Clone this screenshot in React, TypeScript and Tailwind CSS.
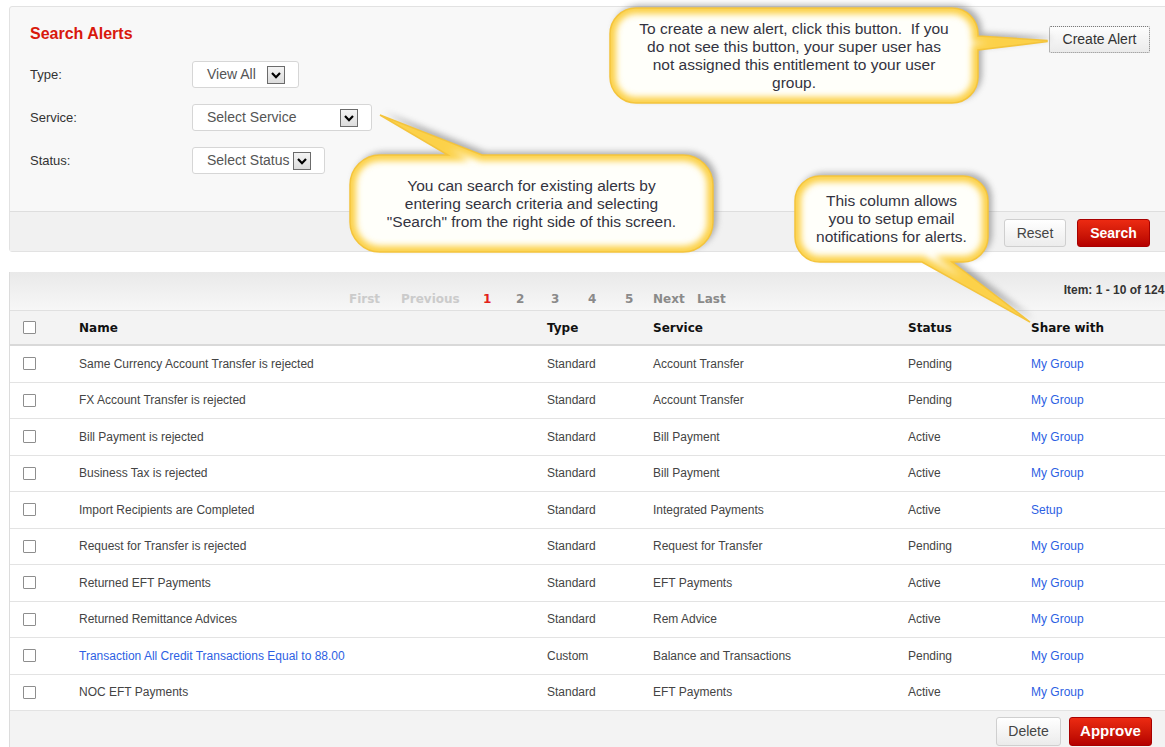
import React from "react";

type Tail =
  | { side: "right"; a: number; b: number; tx: number; ty: number }
  | { side: "top"; a: number; b: number; tx: number; ty: number }
  | { side: "bottom"; a: number; b: number; tx: number; ty: number };

type Callout = {
  id: string;
  x: number;
  y: number;
  w: number;
  h: number;
  r: number;
  tail: Tail;
  lines: string[];
};

// Outline of a rounded speech bubble with a single pointer
function calloutPath(c: Callout): string {
  const { x, y, w, h, r, tail } = c;
  const R = x + w;
  const B = y + h;
  const arc = (ex: number, ey: number) => `A ${r} ${r} 0 0 1 ${ex} ${ey}`;
  if (tail.side === "right") {
    return [
      `M ${x + r} ${y}`,
      `H ${R - r}`,
      arc(R, y + r),
      `V ${tail.a}`,
      `L ${tail.tx} ${tail.ty - 0.6}`,
      `L ${tail.tx} ${tail.ty + 0.6}`,
      `L ${R} ${tail.b}`,
      `V ${B - r}`,
      arc(R - r, B),
      `H ${x + r}`,
      arc(x, B - r),
      `V ${y + r}`,
      arc(x + r, y),
      "Z",
    ].join(" ");
  }
  if (tail.side === "top") {
    return [
      `M ${x + r} ${y}`,
      `H ${tail.a}`,
      `L ${tail.tx} ${tail.ty}`,
      `L ${tail.b} ${y}`,
      `H ${R - r}`,
      arc(R, y + r),
      `V ${B - r}`,
      arc(R - r, B),
      `H ${x + r}`,
      arc(x, B - r),
      `V ${y + r}`,
      arc(x + r, y),
      "Z",
    ].join(" ");
  }
  return [
    `M ${x + r} ${y}`,
    `H ${R - r}`,
    arc(R, y + r),
    `V ${B - r}`,
    arc(R - r, B),
    `H ${tail.b}`,
    `L ${tail.tx} ${tail.ty}`,
    `L ${tail.a} ${B}`,
    `H ${x + r}`,
    arc(x, B - r),
    `V ${y + r}`,
    arc(x + r, y),
    "Z",
  ].join(" ");
}

const callouts: Callout[] = [
  {
    id: "create",
    x: 610,
    y: 8,
    w: 368,
    h: 95,
    r: 26,
    tail: { side: "right", a: 36, b: 50, tx: 1047, ty: 41 },
    lines: [
      "To create a new alert, click this button.  If you",
      "do not see this button, your super user has",
      "not assigned this entitlement to your user",
      "group.",
    ],
  },
  {
    id: "search",
    x: 350,
    y: 155,
    w: 363,
    h: 97,
    r: 30,
    tail: { side: "top", a: 448, b: 482, tx: 380, ty: 115 },
    lines: [
      "You can search for existing alerts by",
      "entering search criteria and selecting",
      '"Search" from the right side of this screen.',
    ],
  },
  {
    id: "share",
    x: 795,
    y: 176,
    w: 193,
    h: 86,
    r: 25,
    tail: { side: "bottom", a: 922, b: 952, tx: 1030, ty: 322 },
    lines: ["This column allows", "you to setup email", "notifications for alerts."],
  },
];

type Row = {
  name: string;
  type: string;
  service: string;
  status: string;
  share: string;
  link?: boolean;
};

const rows: Row[] = [
  { name: "Same Currency Account Transfer is rejected", type: "Standard", service: "Account Transfer", status: "Pending", share: "My Group" },
  { name: "FX Account Transfer is rejected", type: "Standard", service: "Account Transfer", status: "Pending", share: "My Group" },
  { name: "Bill Payment is rejected", type: "Standard", service: "Bill Payment", status: "Active", share: "My Group" },
  { name: "Business Tax is rejected", type: "Standard", service: "Bill Payment", status: "Active", share: "My Group" },
  { name: "Import Recipients are Completed", type: "Standard", service: "Integrated Payments", status: "Active", share: "Setup" },
  { name: "Request for Transfer is rejected", type: "Standard", service: "Request for Transfer", status: "Pending", share: "My Group" },
  { name: "Returned EFT Payments", type: "Standard", service: "EFT Payments", status: "Active", share: "My Group" },
  { name: "Returned Remittance Advices", type: "Standard", service: "Rem Advice", status: "Active", share: "My Group" },
  { name: "Transaction All Credit Transactions Equal to 88.00", type: "Custom", service: "Balance and Transactions", status: "Pending", share: "My Group", link: true },
  { name: "NOC EFT Payments", type: "Standard", service: "EFT Payments", status: "Active", share: "My Group" },
];

function ArrowBox() {
  return (
    <span className="flex h-[18px] w-[18px] shrink-0 items-center justify-center border border-[#6b6b6b] bg-gradient-to-b from-[#f4f4f4] to-[#dcdcdc]">
      <svg width="12" height="12" viewBox="0 0 12 12">
        <polyline points="2,4 6,8.2 10,4" fill="none" stroke="#000" strokeWidth="2.2" strokeLinejoin="miter" />
      </svg>
    </span>
  );
}

function SelectBox({ label, width }: { label: string; width: string }) {
  return (
    <div
      className={`flex h-[27px] items-center justify-between rounded-[3px] border border-[#d6d6d6] bg-white pl-[14px] pr-[13px] text-[14px] text-[#555] ${width}`}
    >
      <span className="whitespace-nowrap">{label}</span>
      <ArrowBox />
    </div>
  );
}

function CheckBox() {
  return <span className="block h-[13px] w-[13px] rounded-[1px] border border-[#8e8e8e] bg-white" />;
}

export default function App() {
  return (
    <div className="relative h-[747px] w-[1165px] overflow-hidden bg-white font-['Liberation_Sans',Arial,sans-serif] text-[#333]">
      <div className="pt-[6px]">
        {/* Search criteria panel */}
        <div className="ml-[9px] w-[1170px] rounded-[3px] border border-[#e2e2e2] bg-[#f8f8f8]">
          <div className="h-[204px] pl-[20px] pr-[28px] pt-[17px]">
            <div className="flex items-start justify-between">
              <h1 className="text-[16px] font-bold leading-[20px] text-[#d8190c]">Search Alerts</h1>
              <button className="mt-[2px] flex h-[27px] w-[101px] items-center justify-center rounded-[2px] border border-dotted border-[#7a7a7a] bg-gradient-to-b from-[#fdfdfd] to-[#ebebeb] text-[14px] text-[#333]">
                Create Alert
              </button>
            </div>
            <div className="mt-[8px] flex flex-col gap-[16px] text-[13px] text-[#333]">
              <div className="flex items-center">
                <span className="w-[162px]">Type:</span>
                <SelectBox label="View All" width="w-[107px]" />
              </div>
              <div className="flex items-center">
                <span className="w-[162px]">Service:</span>
                <SelectBox label="Select Service" width="w-[180px]" />
              </div>
              <div className="flex items-center">
                <span className="w-[162px]">Status:</span>
                <SelectBox label="Select Status" width="w-[133px]" />
              </div>
            </div>
          </div>
          <div className="flex h-[40px] justify-end gap-[11px] border-t border-[#dedede] bg-[#f1f1f1] pr-[28px] pt-[7px]">
            <button className="h-[28px] w-[62px] rounded-[3px] border border-[#cfcfcf] bg-gradient-to-b from-[#ffffff] to-[#ececec] text-[14px] text-[#444]">
              Reset
            </button>
            <button className="h-[28px] w-[73px] rounded-[3px] border border-[#a80000] bg-gradient-to-b from-[#ec2a12] to-[#b50000] text-[14px] font-bold text-white">
              Search
            </button>
          </div>
        </div>

        {/* Results panel */}
        <div className="ml-[9px] mt-[20px] w-[1170px] border-l border-[#dcdcdc] bg-[#f3f3f3]">
          <div className="flex h-[38px] items-start bg-gradient-to-b from-[#e9e9e9] to-[#f7f7f7] font-['DejaVu_Sans',Verdana,sans-serif] text-[12px] font-bold leading-[14px]">
            <div className="flex pl-[339px] pt-[20px] text-[#8a8a8a]">
              <span className="w-[52px] text-[#cbcbcb]">First</span>
              <span className="w-[82px] text-[#cbcbcb]">Previous</span>
              <span className="w-[33px] text-[#e3211a]">1</span>
              <span className="w-[35px]">2</span>
              <span className="w-[37px]">3</span>
              <span className="w-[37px]">4</span>
              <span className="w-[28px]">5</span>
              <span className="w-[44px]">Next</span>
              <span>Last</span>
            </div>
            <div className="ml-[338px] whitespace-nowrap pt-[11px] font-['Liberation_Sans',Arial,sans-serif] text-[12px] text-[#333]">
              Item: 1 - 10 of 124
            </div>
          </div>

          <div className="grid h-[36px] grid-cols-[69px_468px_106px_255px_123px_1fr] items-center border-t border-b-2 border-[#e0e0e0] border-b-[#d9d9d9] bg-[#f3f3f3] font-['DejaVu_Sans',Verdana,sans-serif] text-[12px] font-bold text-[#111]">
            <div className="pl-[13px]">
              <CheckBox />
            </div>
            <div>Name</div>
            <div>Type</div>
            <div>Service</div>
            <div>Status</div>
            <div>Share with</div>
          </div>

          {rows.map((r) => (
            <div
              key={r.name}
              className="grid h-[36.5px] grid-cols-[69px_468px_106px_255px_123px_1fr] items-center border-b border-[#e3e3e3] bg-white text-[12px] text-[#444]"
            >
              <div className="pl-[13px]">
                <CheckBox />
              </div>
              <div className={r.link ? "text-[#2d5fe3]" : ""}>{r.name}</div>
              <div>{r.type}</div>
              <div>{r.service}</div>
              <div>{r.status}</div>
              <div className="text-[#2d5fe3]">{r.share}</div>
            </div>
          ))}

          <div className="flex h-[60px] justify-end gap-[8px] pr-[27px] pt-[6px]">
            <button className="h-[29px] w-[65px] rounded-[3px] border border-[#cfcfcf] bg-gradient-to-b from-[#ffffff] to-[#ebebeb] text-[14px] text-[#444]">
              Delete
            </button>
            <button className="h-[29px] w-[83px] rounded-[3px] border border-[#a80000] bg-gradient-to-b from-[#ec2a12] to-[#b50000] text-[15px] font-bold text-white">
              Approve
            </button>
          </div>
        </div>
      </div>

      {/* Help callouts drawn over the page */}
      <svg className="pointer-events-none absolute left-0 top-0" width="1165" height="747" viewBox="0 0 1165 747">
        <defs>
          <filter id="calloutShadow" x="-20%" y="-20%" width="140%" height="140%">
            <feGaussianBlur stdDeviation="3" />
          </filter>
          <filter id="calloutGlow" x="-20%" y="-20%" width="140%" height="140%">
            <feGaussianBlur stdDeviation="3" />
          </filter>
          {callouts.map((c) => (
            <clipPath key={c.id} id={`clip-${c.id}`}>
              <path d={calloutPath(c)} />
            </clipPath>
          ))}
        </defs>
        {callouts.map((c) => {
          const d = calloutPath(c);
          return (
            <g key={c.id}>
              <path d={d} transform="translate(4,-3)" fill="#6f6f6f" opacity="0.55" filter="url(#calloutShadow)" />
              <path d={d} fill="#fffffa" />
              <g clipPath={`url(#clip-${c.id})`}>
                <path d={d} fill="none" stroke="#fcd148" strokeWidth="12" filter="url(#calloutGlow)" />
              </g>
              <path d={d} fill="none" stroke="#f4c43c" strokeWidth="1.5" />
            </g>
          );
        })}
      </svg>

      {callouts.map((c) => (
        <div
          key={c.id}
          className="absolute flex flex-col items-center justify-center text-center text-[15.5px] leading-[18px] text-[#33333f]"
          style={{ left: c.x, top: c.y, width: c.w, height: c.h }}
        >
          {c.lines.map((l) => (
            <div key={l} className="whitespace-pre">
              {l}
            </div>
          ))}
        </div>
      ))}
    </div>
  );
}
